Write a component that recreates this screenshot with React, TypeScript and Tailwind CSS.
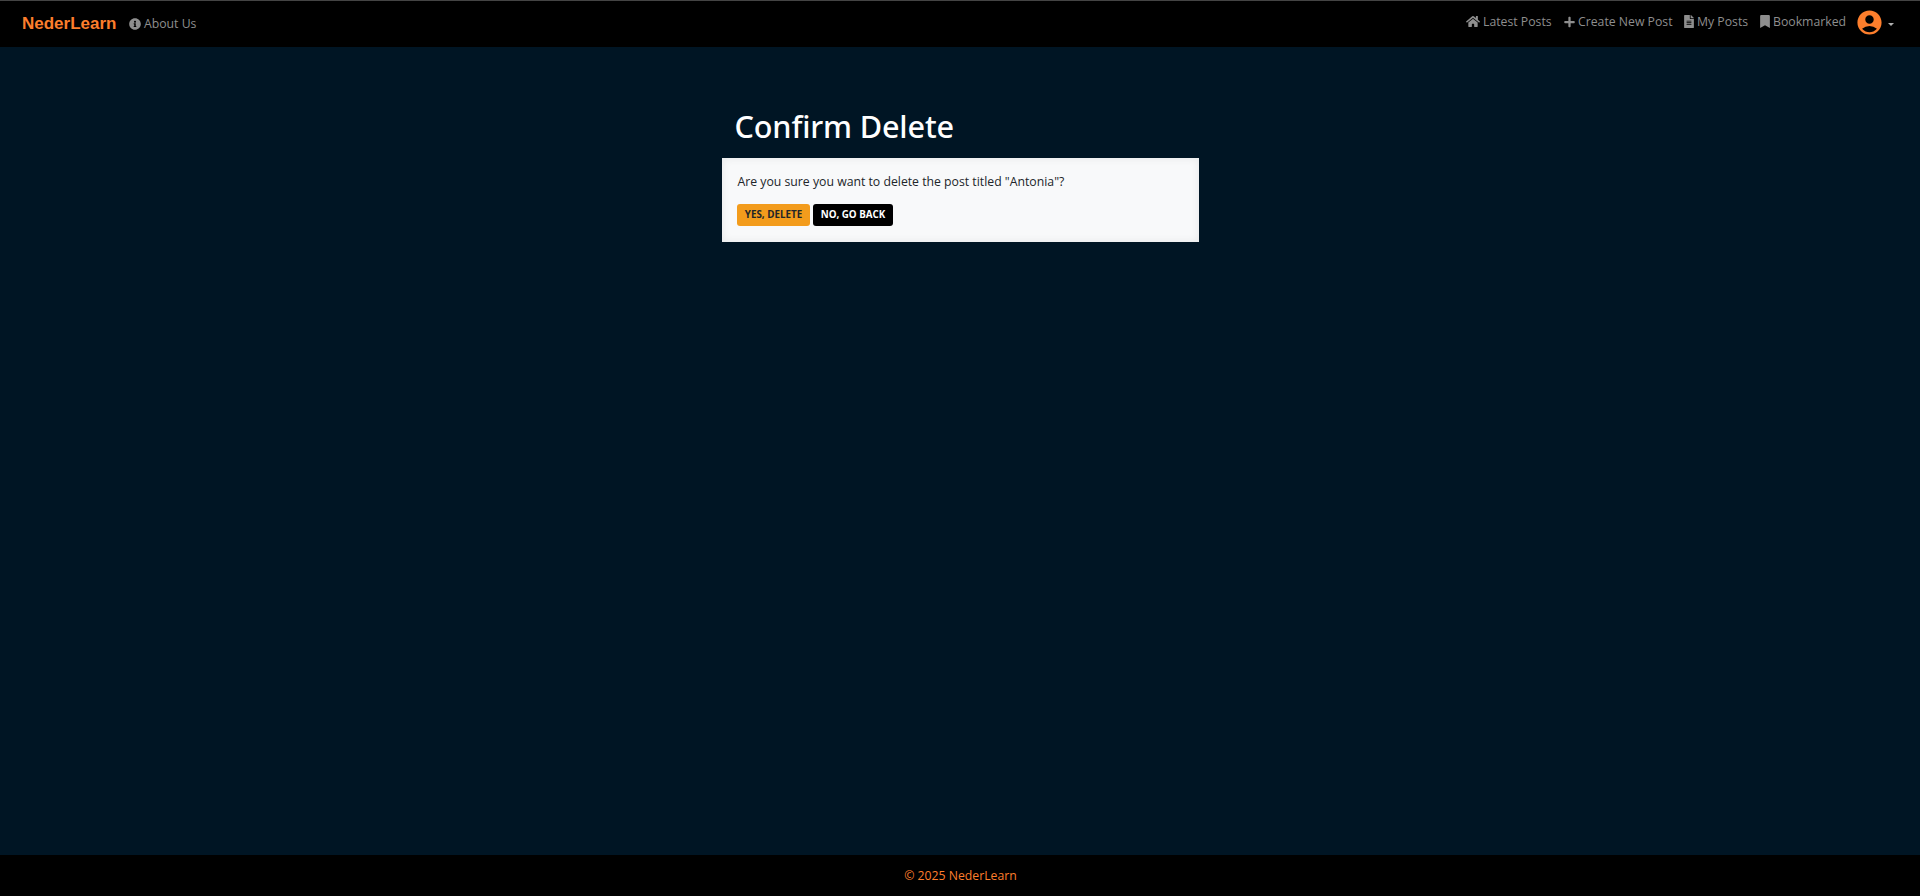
import type { ReactNode } from "react";
import { FaHome, FaPlus, FaInfoCircle, FaBookmark, FaFileAlt } from "react-icons/fa";
import { MdAccountCircle } from "react-icons/md";

function NavItem({ icon, label, width }: { icon: ReactNode; label: string; width: string }) {
  return (
    <a href="#" className={`flex shrink-0 items-center gap-[3px] whitespace-nowrap ${width}`}>
      {icon}
      <span>{label}</span>
    </a>
  );
}

export default function App() {
  return (
    <div className="flex h-[896px] w-full flex-col bg-[#001524] font-['Open_Sans','Noto_Sans',sans-serif] text-[12.25px] leading-5">
      <nav className="flex h-[47px] shrink-0 items-center justify-between border-t border-[#444444] bg-black pl-[22px] text-[#8e8e8e]">
        <div className="flex items-center">
          <a href="#" className="w-[107px] font-['Liberation_Sans',Arial,sans-serif] text-[17px] font-bold text-[#fd7e2c]">NederLearn</a>
          <NavItem icon={<FaInfoCircle className="size-3" />} label="About Us" width="w-[80px]" />
        </div>
        <div className="flex items-center pb-[4px]">
          <div className="flex pb-px">
            <NavItem icon={<FaHome className="h-[13px] w-[14px]" />} label="Latest Posts" width="w-[98px]" />
            <NavItem icon={<FaPlus className="h-3 w-[11px]" />} label="Create New Post" width="w-[120px]" />
            <NavItem icon={<FaFileAlt className="h-[13px] w-[10px]" />} label="My Posts" width="w-[76px]" />
            <NavItem icon={<FaBookmark className="h-[13px] w-[10px]" />} label="Bookmarked" width="w-[95px]" />
          </div>
          <button className="flex w-[65px] items-center gap-1">
            <MdAccountCircle className="size-[29px] text-[#fd7e2c]" />
            <span className="mt-[5px] border-x-[3px] border-t-[3px] border-x-transparent border-t-[#b0b0b0]" />
          </button>
        </div>
      </nav>
      <main className="flex grow flex-col items-center pt-[59px]">
        <div className="w-[477px]">
          <h1 className="h-[52px] pl-[13px] font-['Noto_Sans','Open_Sans',sans-serif] text-[30.625px] leading-[41px] font-medium tracking-[-0.15px] text-white">Confirm Delete</h1>
          <section className="h-[84px] bg-[#f8f9fa] pt-[14px] pl-[15px] text-[#212529] shadow-[inset_0_0_8px_rgba(0,0,0,0.08)]">
            <p className="pl-px">Are you sure you want to delete the post titled "Antonia"?</p>
            <div className="mt-[12px] flex gap-[3px] text-[9.8px] leading-[21px] font-bold">
              <button className="h-[22px] w-[73px] rounded-[3px] bg-[#f39c1c] pb-px pl-px text-[#212529]">YES, DELETE</button>
              <button className="h-[22px] w-[80px] rounded-[3px] bg-black pb-px pl-px text-white">NO, GO BACK</button>
            </div>
          </section>
        </div>
      </main>
      <footer className="flex h-[41px] shrink-0 items-center justify-center bg-black pl-px text-[#fd7e2c]">© 2025 NederLearn</footer>
    </div>
  );
}
